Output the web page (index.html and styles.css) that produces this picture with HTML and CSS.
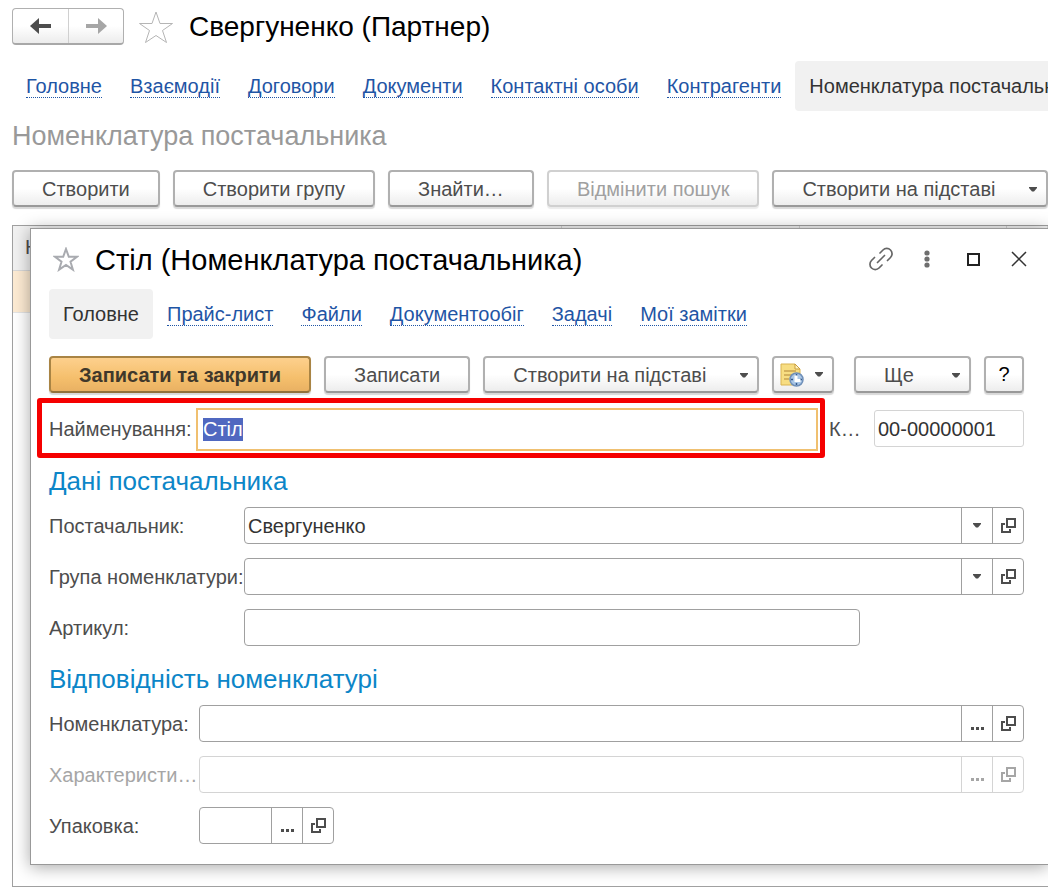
FILE: index.html
```
<!DOCTYPE html>
<html lang="uk">
<head>
    <meta charset="UTF-8">
    <meta name="viewport" content="width=device-width, initial-scale=1.0">
    <title>Свергуненко (Партнер)</title>
    <link rel="stylesheet" href="styles.css">
</head>
<body>
    <!-- Shared icons -->
    <svg class="sprite" aria-hidden="true">
        <symbol id="open" viewBox="0 0 15 15">
            <path d="M6 1h8v8H6z M4 6H1v8h8v-3" fill="none" stroke="currentColor" stroke-width="2"/>
        </symbol>
        <symbol id="arrow" viewBox="0 0 8 5">
            <path d="M0 0h8v1L5 4.500H3L0 1z" fill="currentColor"/>
        </symbol>
        <symbol id="dots" viewBox="0 0 13 3">
            <path d="M0 0h3v3H0z M5 0h3v3H5z M10 0h3v3h-3z" fill="currentColor"/>
        </symbol>
        <symbol id="star" viewBox="0 0 36 34">
            <path d="M18 2l4 11.500h12.500L24.500 20.500l4 12L18 25.500 7.500 32.500l4-12L1.500 13.500H14z" fill="none" stroke="currentColor"/>
        </symbol>
    </svg>

    <!-- Page header -->
    <header class="page-header">
        <div class="history">
            <button type="button" aria-label="Назад">
                <svg width="22" height="16" viewBox="0 0 22 16"><path d="M0 8l9-8v6h12v4H9v6z" fill="#4d4d4d"/></svg>
            </button>
            <button type="button" class="forward" aria-label="Вперед">
                <svg width="22" height="16" viewBox="0 0 22 16"><path d="M22 8l-9-8v6H1v4h12v6z" fill="#a6a6a6"/></svg>
            </button>
        </div>
        <svg class="page-star" width="36" height="34"><use href="#star"/></svg>
        <h1>Свергуненко (Партнер)</h1>
    </header>

    <nav class="tabs page-tabs">
        <a href="#"><span>Головне</span></a>
        <a href="#"><span>Взаємодії</span></a>
        <a href="#"><span>Договори</span></a>
        <a href="#"><span>Документи</span></a>
        <a href="#"><span>Контактні особи</span></a>
        <a href="#"><span>Контрагенти</span></a>
        <a href="#" class="current"><span>Номенклатура постачальника</span></a>
    </nav>

    <h2 class="list-title">Номенклатура постачальника</h2>

    <div class="toolbar page-toolbar">
        <button type="button" class="btn">Створити</button>
        <button type="button" class="btn">Створити групу</button>
        <button type="button" class="btn">Знайти…</button>
        <button type="button" class="btn" disabled>Відмінити пошук</button>
        <button type="button" class="btn menu">Створити на підставі <svg width="8" height="5"><use href="#arrow"/></svg></button>
    </div>

    <div class="workspace">
        <!-- Item list -->
        <div class="list">
            <table>
                <thead>
                    <tr><th class="col-name">Н</th><th class="col-unit"></th><th class="col-code"></th><th></th></tr>
                </thead>
                <tbody>
                    <tr><td></td><td></td><td></td><td></td></tr>
                </tbody>
            </table>
        </div>

        <!-- Item window -->
        <section class="window">
            <header class="window-header">
                <svg class="window-star" width="26" height="25" viewBox="0 0 26 25"><path d="M13 2l2.800 7.800h8.200l-6.500 4.900 2.400 8L13 18l-6.900 4.700 2.400-8L2 9.800h8.200z" fill="none" stroke="#a9abb0" stroke-width="2"/></svg>
                <h1>Стіл (Номенклатура постачальника)</h1>
                <div class="window-buttons">
                    <button type="button" aria-label="Отримати посилання">
                        <svg width="24" height="24" viewBox="0 0 24 24" fill="none" stroke="#666" stroke-width="1.700" stroke-linecap="round"><path d="M8.500 15.500l7-7 M11 6l3-3a5 5 0 0 1 7.500 7.500l-3 3 M5.500 10.500l-3 3a5 5 0 0 0 7.500 7.500l3-3"/></svg>
                    </button>
                    <button type="button" aria-label="Додаткові дії">
                        <svg width="6" height="18" viewBox="0 0 6 18" fill="#6e6e6e"><circle cx="3" cy="3" r="2.600"/><circle cx="3" cy="9" r="2.600"/><circle cx="3" cy="15" r="2.600"/></svg>
                    </button>
                    <button type="button" aria-label="Розгорнути">
                        <svg width="13" height="13" viewBox="0 0 13 13"><path d="M1 1h11v11H1z" fill="none" stroke="#222" stroke-width="2"/></svg>
                    </button>
                    <button type="button" aria-label="Закрити">
                        <svg width="16" height="16" viewBox="0 0 16 16"><path d="M1 1l14 14M15 1L1 15" stroke="#333" stroke-width="1.500"/></svg>
                    </button>
                </div>
            </header>

            <nav class="tabs">
                <a href="#" class="current"><span>Головне</span></a>
                <a href="#"><span>Прайс-лист</span></a>
                <a href="#"><span>Файли</span></a>
                <a href="#"><span>Документообіг</span></a>
                <a href="#"><span>Задачі</span></a>
                <a href="#"><span>Мої замітки</span></a>
            </nav>

            <div class="toolbar window-toolbar">
                <button type="button" class="btn primary">Записати та закрити</button>
                <button type="button" class="btn">Записати</button>
                <button type="button" class="btn menu">Створити на підставі <svg width="8" height="5"><use href="#arrow"/></svg></button>
                <button type="button" class="btn icon-menu" aria-label="Нагадування">
                    <svg width="24" height="24" viewBox="0 0 24 24">
                        <path d="M1 1h14l5 5v16H1z" fill="#f7dd82" stroke="#d9b350"/>
                        <path d="M15 1v5h5z" fill="#fff3c0" stroke="#c99d3c"/>
                        <path d="M4 8h12M4 12h8M4 16h5" stroke="#c9a352" stroke-width="1.500"/>
                        <circle cx="16.500" cy="16.500" r="6.500" fill="#a9c6e6" stroke="#6f8fb8" stroke-width="1.500"/>
                        <path d="M16.500 11v2M16.500 20v2M11 16.500h2M20 16.500h2" stroke="#34598c" stroke-width="1.500"/>
                        <path d="M16 12.500v5h4.500" fill="none" stroke="#fff" stroke-width="3"/>
                    </svg>
                    <svg width="8" height="5"><use href="#arrow"/></svg>
                </button>
                <button type="button" class="btn menu more">Ще <svg width="8" height="5"><use href="#arrow"/></svg></button>
                <button type="button" class="btn help">?</button>
            </div>

            <div class="name-row">
                <div class="highlight">
                    <label for="name">Найменування:</label>
                    <input type="text" id="name" class="name-input" value="Стіл">
                </div>
                <label for="code" class="code-label">Код:</label>
                <input type="text" id="code" class="code-input" value="00-00000001" readonly>
            </div>

            <h2>Дані постачальника</h2>
            <div class="fields wide-labels">
                <label for="supplier">Постачальник:</label>
                <div class="field">
                    <input type="text" id="supplier" value="Свергуненко">
                    <button type="button" aria-label="Вибрати"><svg width="8" height="5"><use href="#arrow"/></svg></button>
                    <button type="button" aria-label="Відкрити"><svg width="15" height="15"><use href="#open"/></svg></button>
                </div>
                <label for="group">Група номенклатури:</label>
                <div class="field">
                    <input type="text" id="group">
                    <button type="button" aria-label="Вибрати"><svg width="8" height="5"><use href="#arrow"/></svg></button>
                    <button type="button" aria-label="Відкрити"><svg width="15" height="15"><use href="#open"/></svg></button>
                </div>
                <label for="article">Артикул:</label>
                <div class="field article">
                    <input type="text" id="article">
                </div>
            </div>

            <h2 class="second">Відповідність номенклатурі</h2>
            <div class="fields">
                <label for="item">Номенклатура:</label>
                <div class="field">
                    <input type="text" id="item">
                    <button type="button" aria-label="Вибрати"><svg class="dots" width="13" height="3"><use href="#dots"/></svg></button>
                    <button type="button" aria-label="Відкрити"><svg width="15" height="15"><use href="#open"/></svg></button>
                </div>
                <label for="feature" class="off">Характеристика:</label>
                <div class="field off">
                    <input type="text" id="feature" disabled>
                    <button type="button" aria-label="Вибрати" disabled><svg class="dots" width="13" height="3"><use href="#dots"/></svg></button>
                    <button type="button" aria-label="Відкрити" disabled><svg width="15" height="15"><use href="#open"/></svg></button>
                </div>
                <label for="pack">Упаковка:</label>
                <div class="field pack">
                    <input type="text" id="pack">
                    <button type="button" aria-label="Вибрати"><svg class="dots" width="13" height="3"><use href="#dots"/></svg></button>
                    <button type="button" aria-label="Відкрити"><svg width="15" height="15"><use href="#open"/></svg></button>
                </div>
            </div>
        </section>
    </div>

    <script>
        // Start with the name selected, ready to be typed over
        var nameInput = document.getElementById('name');
        nameInput.focus();
        nameInput.select();
    </script>
</body>
</html>
```
FILE: styles.css
```
* {
    box-sizing: border-box;
}

body {
    margin: 0;
    padding: 8px 0 4px 12px;
    font-family: "Liberation Sans", Arial, sans-serif;
    font-size: 20px;
    color: #4d4d4d;
    background: #fff;
    overflow-x: hidden;
}

h1, h2 {
    margin: 0;
    font-weight: normal;
    white-space: nowrap;
}

h1 {
    font-size: 28px;
    line-height: 36px;
    color: #000;
}

button, input {
    font-family: inherit;
    font-size: inherit;
    color: inherit;
}

button {
    margin: 0;
    padding: 0;
    border: none;
    background: none;
    cursor: pointer;
}

svg {
    display: block;
    flex: none;
}

.sprite {
    position: absolute;
    width: 0;
    height: 0;
}

/* Page header */
.page-header {
    display: flex;
    align-items: center;
    height: 37px;
}

.history {
    display: flex;
    height: 37px;
    border: 1px solid #b0b0b0;
    border-bottom: 2px solid #a8a8a8;
    border-radius: 4px;
    background: linear-gradient(#fff 50%, #ececec);
}

.history button {
    display: flex;
    align-items: center;
    justify-content: center;
    width: 55px;
}

.history .forward {
    border-left: 1px solid #d0d0d0;
}

.page-star {
    margin: 0 15px 0 14px;
    color: #b5b5b5;
}

/* Tabs */
.tabs {
    display: flex;
}

.tabs a {
    padding: 0 14px;
    border-radius: 4px;
    line-height: 50px;
    color: #1f55a5;
    text-decoration: none;
    white-space: nowrap;
}

.tabs span {
    border-bottom: 1px dotted #1f55a5;
}

.tabs .current {
    background: #f1f1f1;
    color: #333;
}

.tabs .current span {
    border: none;
}

.page-tabs {
    margin-top: 16px;
    overflow: hidden;
}

.list-title {
    font-size: 27px;
    line-height: 50px;
    color: #999;
}

/* Buttons */
.toolbar {
    display: flex;
    gap: 13px;
}

.page-toolbar {
    margin: 9px 0 18px;
}

.btn {
    flex: none;
    height: 37px;
    padding: 1px 28px 0;
    border: 2px solid #b0b0b0;
    border-bottom-color: #999;
    border-radius: 4px;
    background: linear-gradient(#fff 50%, #ededed);
    box-shadow: 0 2px 1px #d8d8d8;
    white-space: nowrap;
}

.btn:disabled {
    border-color: #d0d0d0;
    color: #a0a0a0;
    box-shadow: 0 2px 1px #ebebeb;
}

.primary {
    border-color: #a98444;
    border-bottom-color: #91713b;
    background: linear-gradient(#fdd08d, #f5bf6c 60%, #e9b163);
    color: #40382b;
    font-weight: bold;
}

.menu {
    display: flex;
    align-items: center;
    justify-content: space-between;
    gap: 34px;
    padding-right: 9px;
}

.icon-menu {
    display: flex;
    align-items: center;
    justify-content: space-between;
    width: 62px;
    padding: 0 9px 0 6px;
}

.more {
    min-width: 117px;
    margin-left: auto;
}

.help {
    width: 40px;
    padding: 0;
    color: #000;
}

/* List with the window lying over it */
.workspace {
    display: grid;
}

.list, .window {
    grid-area: 1 / 1;
    min-width: 0;
}

.list {
    border: 1px solid #a0a0a0;
    border-right: none;
}

.list table {
    width: 100%;
    border-collapse: collapse;
    table-layout: fixed;
}

.list th {
    height: 44px;
    padding: 0 12px;
    border-right: 1px solid #d0d0d0;
    border-bottom: 1px solid #d8d8d8;
    background: #f1f1f1;
    font-weight: normal;
    text-align: left;
}

.list td {
    height: 42px;
    border-bottom: 1px solid #e4e4e4;
    background: #fdebd3;
}

.col-name {
    width: 53%;
}

.col-unit {
    width: 23%;
}

.col-code {
    width: 20%;
}

.window {
    margin: 3px 0 22px 18px;
    padding: 0 24px 20px 18px;
    border: 1px solid #999;
    border-right: none;
    background: #fff;
    box-shadow: 0 2px 16px rgba(0, 0, 0, 0.35);
}

.window-header {
    display: flex;
    align-items: center;
    height: 60px;
}

.window-header h1 {
    padding-top: 2px;
    font-size: 29px;
}

.window-star {
    margin: 0 16px 0 4px;
}

.window-buttons {
    display: flex;
    margin-left: auto;
    margin-right: -18px;
}

.window-buttons button {
    display: flex;
    align-items: center;
    justify-content: center;
    width: 46px;
    height: 36px;
}

.window-toolbar {
    margin-top: 17px;
}

/* Name and code */
.name-row {
    display: flex;
    align-items: center;
    margin: 5px 0 0 -12px;
}

.highlight {
    display: flex;
    align-items: center;
    flex: 1;
    height: 60px;
    padding: 2px 2px 0 7px;
    border: 5px solid #f50000;
    border-radius: 3px;
}

.highlight label {
    width: 147px;
}

.name-input {
    flex: 1;
    min-width: 0;
    height: 43px;
    padding: 0 5px;
    border: 2px solid #f0c070;
    outline: none;
    color: #333;
}

.name-input::selection {
    background: #5068c0;
    color: #fff;
}

.code-label {
    width: 32px;
    margin: 0 13px 0 4px;
    padding-top: 2px;
    overflow: hidden;
    text-overflow: ellipsis;
    white-space: nowrap;
}

.code-input {
    width: 150px;
    height: 37px;
    padding: 2px 3px 0;
    border: 1px solid #d4d4d4;
    border-radius: 3px;
    outline: none;
    color: #333;
}

/* Form fields */
.window h2 {
    padding-bottom: 3px;
    font-size: 26px;
    line-height: 46px;
    color: #0c86c8;
}

.window .second {
    margin-top: 10px;
}

.fields {
    display: grid;
    grid-template-columns: 150px 1fr;
    row-gap: 14px;
    align-items: center;
}

.wide-labels {
    grid-template-columns: 195px 1fr;
}

.fields label {
    padding-top: 2px;
    overflow: hidden;
    text-overflow: ellipsis;
    white-space: nowrap;
}

.field {
    display: flex;
    height: 37px;
    border: 1px solid #a0a0a0;
    border-radius: 4px;
}

.field input {
    flex: 1;
    min-width: 0;
    padding: 2px 3px 0;
    border: none;
    outline: none;
    background: none;
    color: #333;
}

.field button {
    display: flex;
    align-items: center;
    justify-content: center;
    width: 31px;
    border-left: 1px solid #a0a0a0;
}

.field .dots {
    margin-top: 10px;
}

.field.off, .field.off button {
    border-color: #d4d4d4;
}

.off {
    color: #a6a6a6;
}

.article {
    width: 79%;
}

.pack {
    width: 135px;
}
```
